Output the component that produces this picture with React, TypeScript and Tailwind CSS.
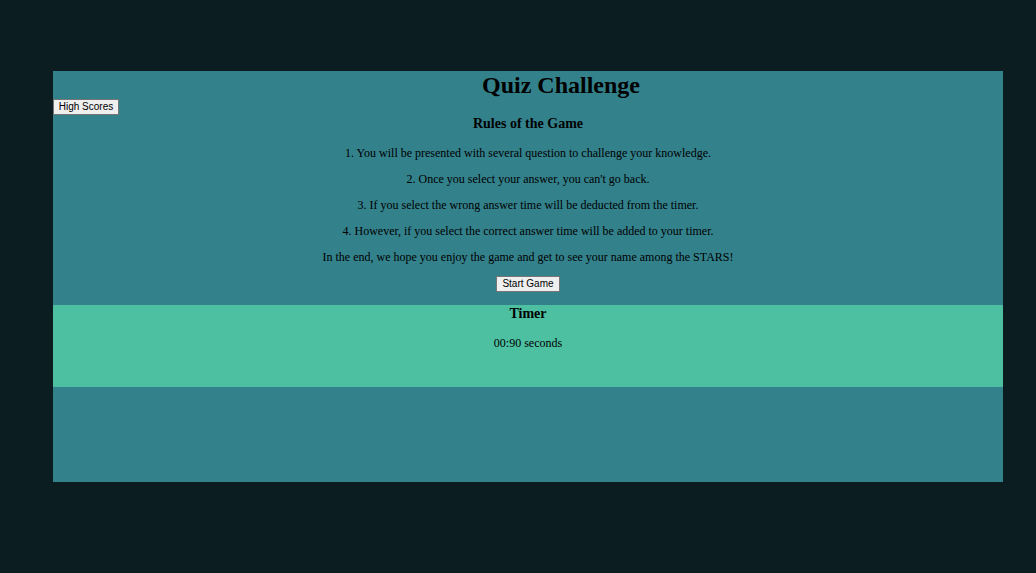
import React from 'react';

const rules = [
  '1. You will be presented with several question to challenge your knowledge.',
  "2. Once you select your answer, you can't go back.",
  '3. If you select the wrong answer time will be deducted from the timer.',
  '4. However, if you select the correct answer time will be added to your timer.',
  'In the end, we hope you enjoy the game and get to see your name among the STARS!',
];

const btn =
  "h-[16px] px-0 whitespace-nowrap bg-[#efefef] border border-[#767676] text-[10px] leading-[14px] text-black font-['Liberation_Sans',Arial,sans-serif]";

const App = () => {
  return (
    <div className="min-h-[573px] bg-[#0b1d21] pt-[71px] font-['Liberation_Serif','Times_New_Roman',serif] text-black">
      <main className="ml-[53px] w-[950px] h-[411px] bg-[#33818b]">
        {/* Header */}
        <h1 className="h-[28px] pl-[66px] text-center text-[24px] leading-[28px] font-bold">Quiz Challenge</h1>
        <div className="flex">
          <button className={`${btn} w-[66px]`}>High Scores</button>
        </div>

        {/* Rules */}
        <section className="flex flex-col items-center">
          <h3 className="text-[14px] leading-[17px] font-bold">Rules of the Game</h3>
          <div className="mt-[13px] flex flex-col items-center gap-[10px]">
            {rules.map((r) => (
              <p key={r} className="text-[12px] leading-[16px]">
                {r}
              </p>
            ))}
          </div>
          <button className={`${btn} mt-[11px] mb-[13px] w-[64px]`}>Start Game</button>
        </section>

        {/* Timer */}
        <section className="h-[82px] bg-[#4dc0a2] flex flex-col items-center">
          <h3 className="text-[14px] leading-[17px] font-bold">Timer</h3>
          <p className="mt-[13px] text-[12px] leading-[16px]">00:90 seconds</p>
        </section>
      </main>
    </div>
  );
};

export default App;
